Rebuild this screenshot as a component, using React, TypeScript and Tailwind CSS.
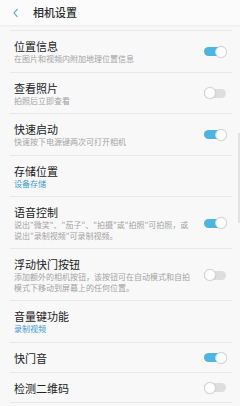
import React from "react";

type Row = {
  title: string;
  sub?: string;
  blue?: boolean;
  toggle?: boolean;
};

const rows: Row[] = [
  { title: "位置信息", sub: "在图片和视频内附加地理位置信息", toggle: true },
  { title: "查看照片", sub: "拍照后立即查看", toggle: false },
  { title: "快速启动", sub: "快速按下电源键两次可打开相机", toggle: true },
  { title: "存储位置", sub: "设备存储", blue: true },
  {
    title: "语音控制",
    sub: "说出\"微笑\"、\"茄子\"、\"拍摄\"或\"拍照\"可拍照，或说出\"录制视频\"可录制视频。",
    toggle: true,
  },
  {
    title: "浮动快门按钮",
    sub: "添加额外的相机按钮，该按钮可在自动模式和自拍模式下移动到屏幕上的任何位置。",
    toggle: false,
  },
  { title: "音量键功能", sub: "录制视频", blue: true },
  { title: "快门音", toggle: true },
  { title: "检测二维码", toggle: false },
];

function Toggle({ on }: { on: boolean }) {
  return (
    <div className="relative w-[23px] h-[12px] flex items-center">
      <div
        className={
          on
            ? "w-[22px] h-[9px] rounded-full bg-[#4cb6e2]"
            : "w-[22px] h-[9px] rounded-full bg-[#dedede]"
        }
      />
      <div
        className={
          on
            ? "absolute right-0 top-0 w-[12px] h-[12px] rounded-full bg-white border border-[#d6d6d6] shadow-[0_0_1px_rgba(0,0,0,0.15)]"
            : "absolute left-0 top-0 w-[12px] h-[12px] rounded-full bg-white border border-[#d6d6d6] shadow-[0_0_1px_rgba(0,0,0,0.15)]"
        }
      />
    </div>
  );
}

export default function App() {
  return (
    <div
      className="relative w-[240px] h-[406px] overflow-hidden bg-[#f8f8f8]"
      style={{ fontFamily: '"Noto Sans CJK SC", "Noto Sans", sans-serif' }}
    >
      <div className="h-[25px] flex items-center bg-[#fbfbfb] shadow-[0_1px_2px_rgba(0,0,0,0.06)]">
        <svg width="8" height="10" viewBox="0 0 8 10" className="ml-[12px]">
          <path d="M5.5 1 L2 5 L5.5 9" fill="none" stroke="#3ea3d6" strokeWidth="1.1" />
        </svg>
        <span className="ml-[13px] text-[11px] font-medium text-[#2a2a2a] leading-none">相机设置</span>
      </div>

      <div className="mt-[5px] mx-[10px] mr-[8px] border-t border-[#e8e8e8]">
        {rows.map((r, i) => (
          <div key={i} className="flex items-center border-b border-[#e8e8e8] pl-[4px] pr-[5px] pt-[8px] pb-[7px]">
            <div className="flex-1">
              <div className="text-[11px] leading-[14px] text-[#222]">{r.title}</div>
              {r.sub && (
                <div
                  className={
                    r.blue
                      ? "mt-px w-[182px] text-[8px] leading-[10.5px] text-[#3a9bd0]"
                      : "mt-px w-[182px] text-[8px] leading-[10.5px] text-[#a3a3a3]"
                  }
                >
                  {r.sub}
                </div>
              )}
            </div>
            {r.toggle !== undefined && <Toggle on={r.toggle} />}
          </div>
        ))}
      </div>

      <div className="absolute right-0 top-[133px] w-[2px] h-[90px] bg-[#e2e2e2]" />
    </div>
  );
}
